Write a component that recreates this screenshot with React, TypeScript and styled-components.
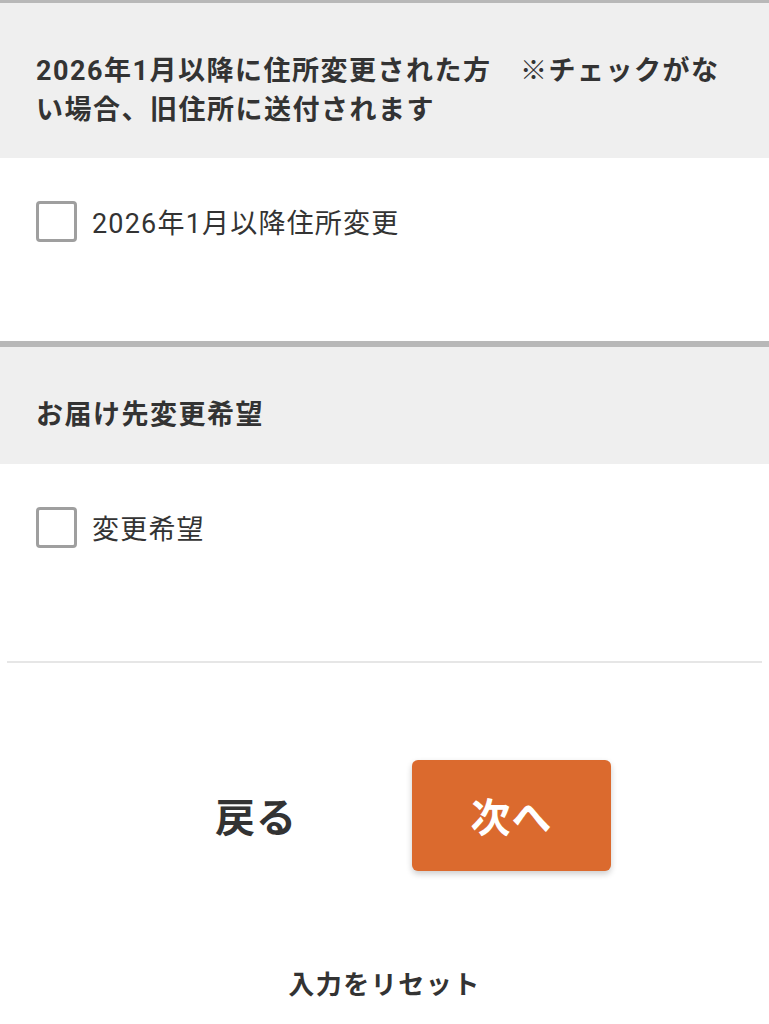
import React, { useState } from 'react';
import styled, { createGlobalStyle } from 'styled-components';

const GlobalStyle = createGlobalStyle`
  html, body {
    margin: 0;
    padding: 0;
    background: #fff;
  }
  body {
    font-family: Roboto, "Noto Sans CJK JP", "Noto Sans", sans-serif;
    color: #333;
  }
`;

type TCheckBox = { checked: boolean };

const App = () => {
  const [moved, setMoved] = useState(false);
  const [change, setChange] = useState(false);

  return (
    <Page>
      <GlobalStyle />
      <Section>
        <SectionHeader>
          2026年1月以降に住所変更された方　※チェックがない場合、旧住所に送付されます
        </SectionHeader>
        <SectionBody>
          <CheckRow onClick={() => setMoved(!moved)}>
            <CheckBox checked={moved} />
            <CheckLabel>2026年1月以降住所変更</CheckLabel>
          </CheckRow>
        </SectionBody>
      </Section>

      <Section>
        <SectionHeader>お届け先変更希望</SectionHeader>
        <SectionBody last>
          <CheckRow onClick={() => setChange(!change)}>
            <CheckBox checked={change} />
            <CheckLabel>変更希望</CheckLabel>
          </CheckRow>
        </SectionBody>
      </Section>

      <Divider />

      <ButtonRow>
        <BackButton type="button">戻る</BackButton>
        <NextButton type="button">次へ</NextButton>
      </ButtonRow>

      <ResetLink type="button">入力をリセット</ResetLink>
    </Page>
  );
};
export default App;

// --- Styled Components ---
const Page = styled.div`
  width: 769px;
  min-height: 1024px;
  display: flex;
  flex-direction: column;
`;

const Section = styled.section`
  border-top: 3px solid #b8b8b8;
  & + & {
    border-top-width: 6px;
  }
`;

const SectionHeader = styled.h2`
  margin: 0;
  background: #efefef;
  padding: 49px 36px 29px;
  font-size: 27px;
  font-weight: 700;
  line-height: 38.5px;
  color: #333;
  letter-spacing: 1.5px;
`;

const SectionBody = styled.div<{ last?: boolean }>`
  padding: 43px 36px ${({ last }) => (last ? '113px' : '99px')};
`;

const CheckRow = styled.label`
  display: flex;
  align-items: center;
  column-gap: 15px;
  cursor: pointer;
`;

const CheckBox = styled.span<TCheckBox>`
  box-sizing: border-box;
  width: 41px;
  height: 41px;
  border: 3px solid #9f9f9f;
  border-radius: 4px;
  background: ${({ checked }) => (checked ? '#db6a2e' : '#fff')};
  flex-shrink: 0;
`;

const CheckLabel = styled.span`
  font-size: 27px;
  font-weight: 400;
  color: #333;
  letter-spacing: 1.2px;
`;

const Divider = styled.hr`
  margin: 0 7px;
  border: none;
  border-top: 2px solid #e6e6e6;
`;

const ButtonRow = styled.div`
  display: flex;
  justify-content: center;
  align-items: center;
  column-gap: 115px;
  padding: 97px 0 0 57px;
`;

const BackButton = styled.button`
  background: none;
  border: none;
  padding: 0;
  font-family: inherit;
  font-size: 40px;
  font-weight: 700;
  color: #333;
  letter-spacing: 1px;
  cursor: pointer;
`;

const NextButton = styled.button`
  width: 199px;
  height: 111px;
  border: none;
  border-radius: 6px;
  background: #db6a2e;
  box-shadow: 0 3px 6px rgba(0, 0, 0, 0.2);
  font-family: inherit;
  font-size: 40px;
  font-weight: 700;
  color: #fff;
  letter-spacing: 1px;
  cursor: pointer;
`;

const ResetLink = styled.button`
  align-self: center;
  margin-top: 93px;
  background: none;
  border: none;
  padding: 0;
  font-family: inherit;
  font-size: 26px;
  font-weight: 700;
  color: #333;
  letter-spacing: 1.5px;
  cursor: pointer;
`;
